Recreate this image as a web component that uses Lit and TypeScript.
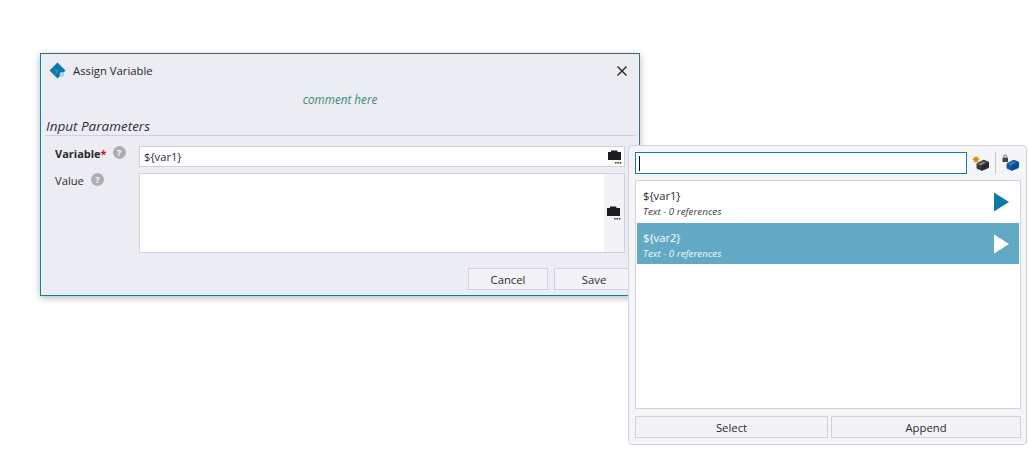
import { LitElement, html, css, svg } from "lit";
import { customElement } from "lit/decorators.js";

const folder = svg`<svg width="15" height="14" viewBox="0 0 15 14"><path d="M4 0.5h6l0.7 1.5H14v8H1V2h3z" fill="#1b1b1f"/><path d="M8 12h1.6v1.4H8zM10.4 12H12v1.4h-1.6zM12.8 12h1.6v1.4h-1.6z" fill="#3a3a40"/></svg>`;

const box = (body: string, dark: string, hi: string) => svg`<path d="M4.5 10.5Q4.5 9.6 5.4 9.1L11 6q.7-.4 1.4-.1l3.7 1.5q.9.4.9 1.3v3.2q0 .9-.8 1.4l-5.7 3.2q-.7.4-1.4.1l-3.6-1.5q-1-.4-1-1.3z" fill="${body}"/><path d="M9.6 16.6V12L17 8v4.8q0 .9-.8 1.4l-5.7 2.4z" fill="${dark}"/><path d="M6 10.4l5.3-3 2.5 1-5 2.9z" fill="${hi}"/>`;

@customElement("app-root")
export class AppRoot extends LitElement {
  static styles = css`
    :host { display: block; position: relative; width: 1029px; height: 450px; background: #fff; overflow: hidden;
      font-family: "Open Sans", "Noto Sans", sans-serif; font-size: 12px; color: #2b2b2f; }
    * { box-sizing: border-box; }
    .dialog { position: absolute; left: 40px; top: 53px; width: 600px; height: 243px; background: #ecedf2;
      border: 1px solid #0f7ea6; border-top-color: #3c6a7c; border-right-color: #3f6f80;
      box-shadow: 0 2px 7px rgba(0,0,0,.28); padding: 0 3px 0 5px; display: flex; flex-direction: column; }
    .title { height: 33px; display: flex; align-items: center; padding-left: 3px; gap: 7px; font-size: 11.3px; flex: none; }
    .title .t { flex: 1; color: #26262a; }
    .close { margin-right: 8px; display: flex; }
    .comment { text-align: center; font-style: italic; color: #3c8a74; font-size: 11.7px; height: 18px; line-height: 18px; flex: none; padding-right: 2px; margin-top: 3px; }
    .section { font-style: italic; font-size: 13.5px; line-height: 18px; height: 28px; padding-top: 9px; border-bottom: 1px solid #d0d0dc; color: #303034; flex: none; }
    .form { padding: 10px 11px 0 9px; display: flex; flex-direction: column; gap: 6px; }
    .row { display: flex; }
    .label { width: 84px; flex: none; display: flex; gap: 7px; align-items: flex-start; line-height: 16px; font-size: 11.2px; }
    .label b { font-weight: 700; font-size: 11px; color: #2a2a2e; margin-right: -1px; }
    .label b i { color: #d0122c; font-style: normal; }
    .help { width: 13px; height: 13px; border-radius: 50%; background: #adadb3; color: #fff; font-size: 9px; font-weight: 700; display: inline-flex; align-items: center; justify-content: center; }
    .field { flex: 1; background: #fff; border: 1px solid #d0d0de; height: 21px; line-height: 19px; padding-left: 4px; font-size: 11.2px; display: flex; justify-content: space-between; }
    .field.area { height: 80px; }
    .strip { width: 20px; background: #f3f3f6; display: flex; align-items: center; justify-content: center; }
    .folder { display: flex; margin: 3px 2px 0 0; }
    .field.area .folder { margin: 0 1px 0 0; }
    .actions { display: flex; gap: 6px; padding: 15px 0 0 422px; }
    button { font: inherit; font-size: 11.3px; color: #2b2b2f; background: #f3f3f7; border: 1px solid #d0d0de; height: 22px; padding: 0; }
    .actions button { width: 80px; flex: none; }
    .pop { position: absolute; left: 628px; top: 145px; width: 399px; height: 300px; background: #f5f5f8; border: 1px solid #d2d2df; border-radius: 4px; padding: 6px; display: flex; flex-direction: column; }
    .search { display: flex; align-items: center; height: 22px; flex: none; }
    .input { width: 332px; height: 22px; background: #fff; border: 1px solid #0f7ea6; padding: 3px; flex: none; }
    .caret { width: 1px; height: 15px; background: #111; }
    .tools { display: flex; align-items: center; padding-left: 5px; }
    .tools svg { display: block; }
    .sep { width: 1px; height: 22px; background: #c4c4ce; margin: 0 6px 0 5px; }
    .list { margin-top: 6px; height: 229px; flex: none; background: #fff; border: 1px solid #d0d0de; padding: 0 1px; width: 386px; }
    .item { height: 41px; padding: 7px 9px 0 6px; display: flex; justify-content: space-between; margin-bottom: 1px; color: #26262a; }
    .item.sel { background: #62a9c6; color: #fff; }
    .name { font-size: 11.2px; line-height: 16px; }
    .meta { font-size: 9.8px; font-style: italic; line-height: 13px; margin-top: 1px; color: #3c3c42; }
    .sel .meta { color: #f2f8fb; }
    .arrow { display: flex; align-items: center; margin-top: -6px; }
    .foot { display: flex; gap: 3px; margin-top: 7px; width: 386px; }
    .foot button { height: 22px; }
    .foot .a { width: 193px; }
    .foot .b { width: 190px; }
  `;

  render() {
    return html`
      <div class="dialog">
        <div class="title">
          <svg width="17" height="17" viewBox="0 0 17 17"><path d="M8.5 .5l8 8-8 8-8-8z" fill="#0b7aa5"/><path d="M6 7.5l2.5 1.500-2 2.500" stroke="#4fa3c6" stroke-width="1" fill="none"/><circle cx="13" cy="12.500" r="2.400" fill="#a9d3ea"/></svg>
          <span class="t">Assign Variable</span>
          <span class="close"><svg width="12" height="12" viewBox="0 0 12 12"><path d="M1.5 1.5l9 9M10.5 1.5l-9 9" stroke="#222" stroke-width="1.4"/></svg></span>
        </div>
        <div class="comment">comment here</div>
        <div class="section">Input Parameters</div>
        <div class="form">
          <div class="row">
            <div class="label"><b>Variable<i>*</i></b><span class="help">?</span></div>
            <div class="field">\${var1}<span class="folder">${folder}</span></div>
          </div>
          <div class="row">
            <div class="label"><span>Value</span><span class="help">?</span></div>
            <div class="field area"><span></span><span class="strip"><span class="folder">${folder}</span></span></div>
          </div>
        </div>
        <div class="actions"><button>Cancel</button><button>Save</button></div>
      </div>
      <div class="pop">
        <div class="search">
          <div class="input"><div class="caret"></div></div>
          <div class="tools">
            <svg width="18" height="18" viewBox="0 0 18 18">${box("#3a3a40", "#2a2a2e", "#8a8a90")}<path d="M4 1.5l.8 2 2-.8-.8 2 2 .8-2 .8.8 2-2-.8L4 9.500l-.8-2-2 .8.8-2-2-.8 2-.8-.8-2 2 .8z" fill="#e08a12"/></svg>
            <span class="sep"></span>
            <svg width="18" height="18" viewBox="0 0 18 18">${box("#125aa6", "#0d4a92", "#2f86d6")}<rect x="0.500" y="3.500" width="5.500" height="4.500" rx=".6" fill="#44444a"/><path d="M1.800 3.500V2.400a1.400 1.400 0 012.800 0V3.500" stroke="#66666c" fill="none"/></svg>
          </div>
        </div>
        <div class="list">
          <div class="item">
            <div><div class="name">\${var1}</div><div class="meta">Text - 0 references</div></div>
            <div class="arrow"><svg width="16" height="20" viewBox="0 0 16 20"><path d="M0 .5L15 10 0 19.500z" fill="#0b7aa5"/></svg></div>
          </div>
          <div class="item sel">
            <div><div class="name">\${var2}</div><div class="meta">Text - 0 references</div></div>
            <div class="arrow"><svg width="16" height="20" viewBox="0 0 16 20"><path d="M0 .5L15 10 0 19.500z" fill="#fff"/></svg></div>
          </div>
        </div>
        <div class="foot"><button class="a">Select</button><button class="b">Append</button></div>
      </div>
    `;
  }
}
